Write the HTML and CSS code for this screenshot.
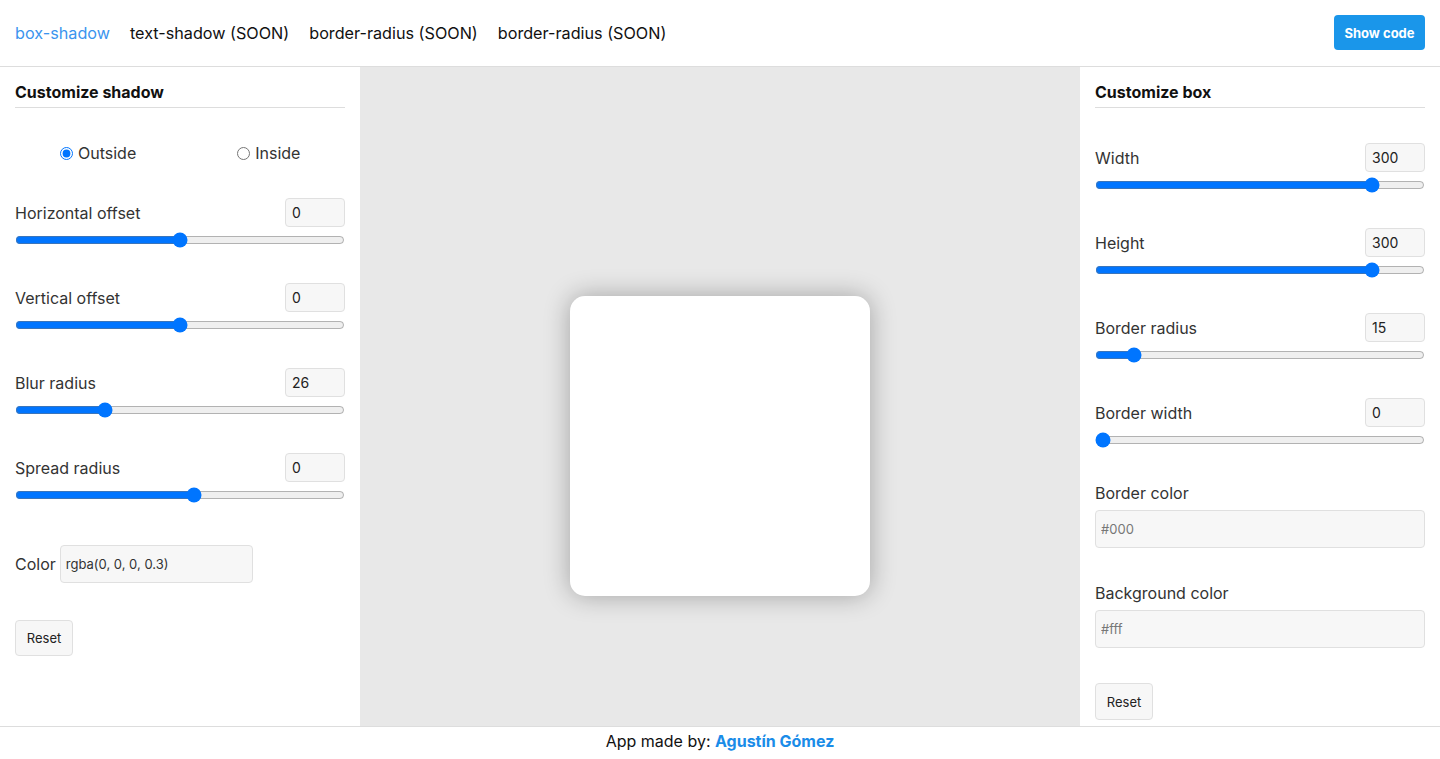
FILE: index.html
```html
<!DOCTYPE html>
<html lang="en">
<head>
<meta charset="utf-8">
<title>box-shadow generator</title>
<link rel="stylesheet" href="styles.css">
</head>
<body>
<header class="topbar">
  <nav class="nav">
    <a class="nav-link active" href="#">box-shadow</a>
    <a class="nav-link" href="#">text-shadow (SOON)</a>
    <a class="nav-link" href="#">border-radius (SOON)</a>
    <a class="nav-link" href="#">border-radius (SOON)</a>
  </nav>
  <button class="show-code">Show code</button>
</header>
<main class="main">
  <aside class="panel">
    <h2 class="panel-title">Customize shadow</h2>
    <div class="radios">
      <label class="radio"><input type="radio" name="pos" checked> Outside</label>
      <label class="radio"><input type="radio" name="pos"> Inside</label>
    </div>
    <div class="control">
      <div class="control-row"><span class="label">Horizontal offset</span><input class="num" type="text" value="0"></div>
      <input class="range" type="range" min="-100" max="100" value="0">
    </div>
    <div class="control">
      <div class="control-row"><span class="label">Vertical offset</span><input class="num" type="text" value="0"></div>
      <input class="range" type="range" min="-100" max="100" value="0">
    </div>
    <div class="control">
      <div class="control-row"><span class="label">Blur radius</span><input class="num" type="text" value="26"></div>
      <input class="range" type="range" min="0" max="100" value="26">
    </div>
    <div class="control">
      <div class="control-row"><span class="label">Spread radius</span><input class="num" type="text" value="0"></div>
      <input class="range" type="range" min="-60" max="50" value="0">
    </div>
    <div class="color-row">
      <span class="label">Color</span>
      <input class="text-in color-in" type="text" value="rgba(0, 0, 0, 0.3)">
    </div>
    <button class="reset reset-left">Reset</button>
  </aside>
  <section class="preview">
    <div class="box"></div>
  </section>
  <aside class="panel">
    <h2 class="panel-title">Customize box</h2>
    <div class="control first">
      <div class="control-row"><span class="label">Width</span><input class="num" type="text" value="300"></div>
      <input class="range" type="range" min="0" max="350" value="300">
    </div>
    <div class="control">
      <div class="control-row"><span class="label">Height</span><input class="num" type="text" value="300"></div>
      <input class="range" type="range" min="0" max="350" value="300">
    </div>
    <div class="control">
      <div class="control-row"><span class="label">Border radius</span><input class="num" type="text" value="15"></div>
      <input class="range" type="range" min="0" max="150" value="15">
    </div>
    <div class="control">
      <div class="control-row"><span class="label">Border width</span><input class="num" type="text" value="0"></div>
      <input class="range" type="range" min="0" max="50" value="0">
    </div>
    <div class="field">
      <span class="label">Border color</span>
      <input class="text-in wide" type="text" placeholder="#000">
    </div>
    <div class="field">
      <span class="label">Background color</span>
      <input class="text-in wide" type="text" placeholder="#fff">
    </div>
    <button class="reset reset-right">Reset</button>
  </aside>
</main>
<footer class="footer">
  App made by: <a class="author" href="#">Agustín Gómez</a>
</footer>
</body>
</html>
```
FILE: styles.css
```css
* { box-sizing: border-box; }
html, body { margin: 0; padding: 0; }
body {
  font-family: Inter, "Noto Sans", sans-serif;
  color: #222;
  background: #fff;
}
.topbar {
  height: 67px;
  border-bottom: 1px solid #ddd;
  display: flex;
  align-items: center;
  justify-content: space-between;
  padding: 0 15px;
}
.nav { display: flex; gap: 20px; margin-top: -1px; }
.nav-link {
  font-size: 16.2px;
  color: #111;
  text-decoration: none;
}
.nav-link.active { color: #3b94ee; }
.show-code {
  background: #1a96ea;
  color: #fff;
  border: none;
  border-radius: 4px;
  height: 35px;
  width: 91px;
  font-family: inherit;
  font-size: 13px;
  font-weight: 700;
  margin-top: -1px;
}
.main {
  display: grid;
  grid-template-columns: 360px 1fr 360px;
  height: calc(100vh - 100px);
  overflow: hidden;
}
.panel {
  padding: 15px;
  display: flex;
  flex-direction: column;
}
.panel-title {
  margin: 0;
  font-size: 16px;
  font-weight: 700;
  line-height: 19px;
  padding-top: 1px;
  padding-bottom: 5px;
  border-bottom: 1px solid #ddd;
  color: #111;
}
.radios {
  display: flex;
  gap: 101px;
  padding-left: 45px;
  margin-top: 35px;
  height: 20px;
  align-items: center;
}
.radio {
  font-size: 16px;
  color: #333;
  display: flex;
  align-items: center;
  gap: 5px;
}
.radio input { margin: 0; width: 13px; height: 13px; accent-color: #0075ff; }
.control { margin-top: 35px; }
.control-row {
  display: flex;
  justify-content: space-between;
  align-items: center;
  height: 29px;
}
.label { font-size: 16px; color: #333; }
.num {
  width: 60px;
  height: 29px;
  border: 1px solid #e0e0e0;
  border-radius: 4px;
  background: #f7f7f7;
  font-family: inherit;
  font-size: 14px;
  color: #222;
  padding: 0 6px;
}
.range {
  display: block;
  width: 100%;
  margin: 5px 0 0;
  height: 16px;
  accent-color: #0075ff;
}
.color-row {
  margin-top: 42px;
  display: flex;
  align-items: center;
  gap: 4px;
}
.text-in {
  height: 38px;
  border: 1px solid #e0e0e0;
  border-radius: 4px;
  background: #f7f7f7;
  font-family: inherit;
  font-size: 13px;
  color: #333;
  padding: 0 5px;
}
.text-in::placeholder { color: #777; }
.color-in { width: 193px; }
.field { margin-top: 35px; display: flex; flex-direction: column; gap: 7px; }
.wide { width: 100%; }
.reset {
  align-self: flex-start;
  flex-shrink: 0;
  width: 58px;
  height: 37px;
  border: 1px solid #e0e0e0;
  border-radius: 4px;
  background: #f7f7f7;
  font-family: inherit;
  font-size: 13px;
  color: #222;
}
.reset-left { margin-top: 37px; height: 36px; }
.reset-right { margin-top: 35px; }
.preview {
  background: #e8e8e8;
  height: calc(100vh - 1px);
  display: flex;
  align-items: center;
  justify-content: center;
}
.box {
  flex-shrink: 0;
  width: 300px;
  height: 300px;
  background: #fff;
  border-radius: 15px;
  box-shadow: 0 0 26px 0 rgba(0, 0, 0, 0.3);
}
.footer {
  border-top: 1px solid #ddd;
  text-align: center;
  font-size: 16px;
  line-height: 19px;
  padding-top: 5px;
  color: #111;
}
.author { color: #1a8ce8; font-weight: 700; text-decoration: none; }
```
